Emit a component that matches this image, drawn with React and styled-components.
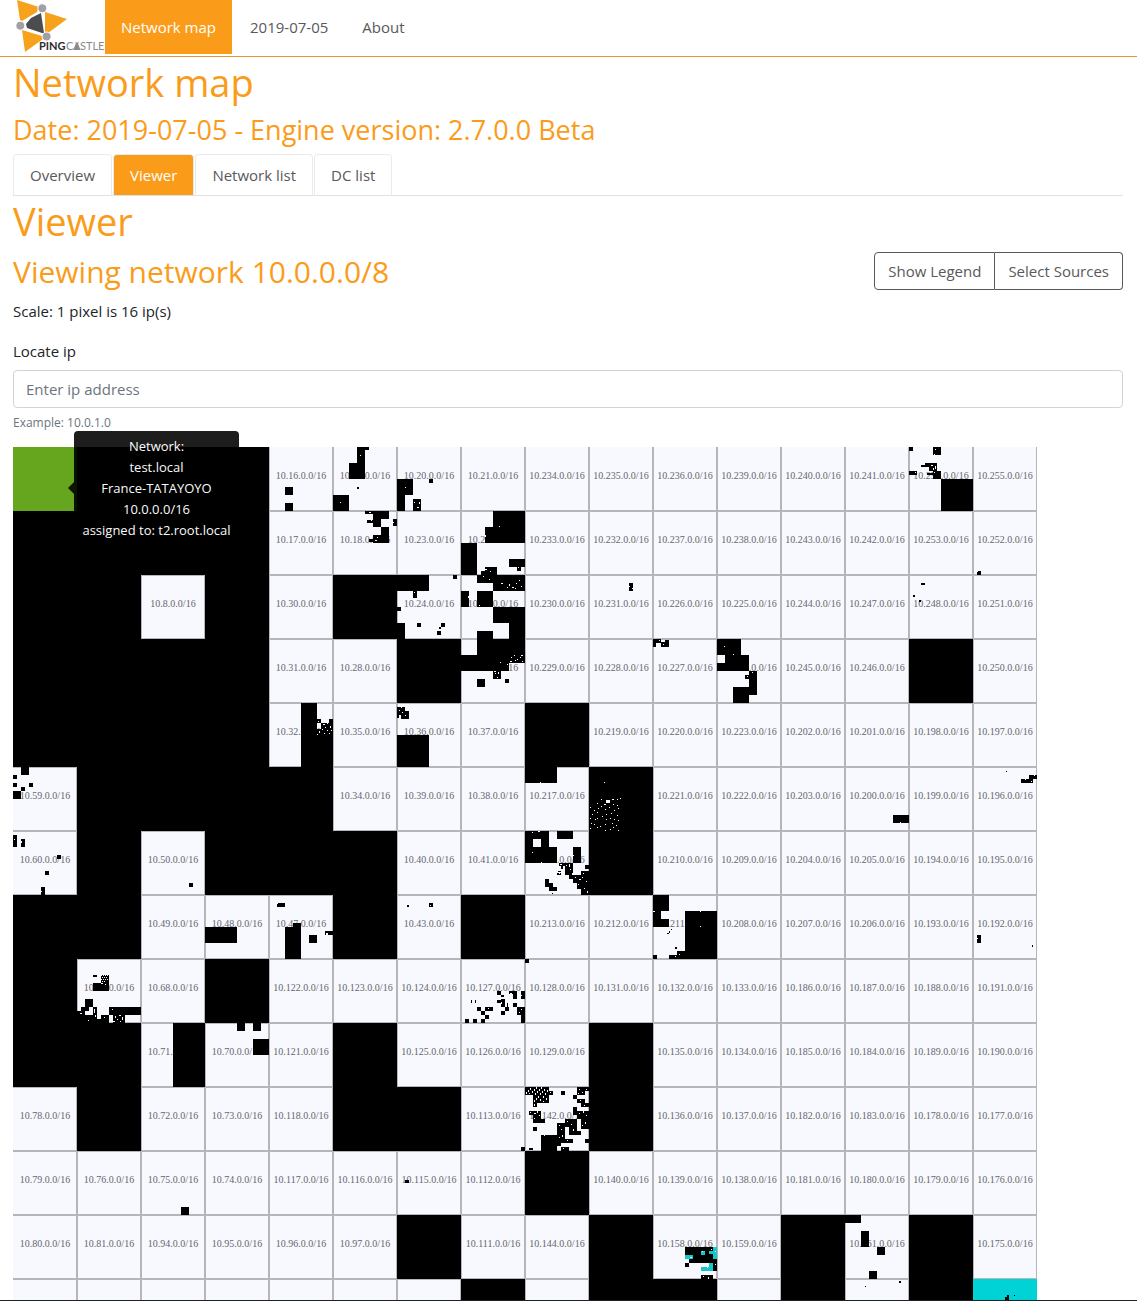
import React from "react";
import styled, { createGlobalStyle, css } from "styled-components";

const ORANGE = "#fa9c1a";
const UI_FONT = '"Open Sans", "Noto Sans", sans-serif';

const GlobalStyle = createGlobalStyle`
  *, *::before, *::after { box-sizing: border-box; }
  body {
    margin: 0;
    background: #fff;
    color: #212529;
    font-family: ${UI_FONT};
    font-size: 15px;
    line-height: 24px;
  }
`;

const Page = styled.div`
  display: flex;
  flex-direction: column;
  height: 100vh;
  overflow: hidden;
  border-bottom: 1px solid #1d2424;
`;

const Header = styled.header`
  display: flex;
  align-items: flex-start;
  flex: none;
  height: 57px;
  padding-left: 13px;
  border-bottom: 1px solid #e39a2d;
`;

const Brand = styled.a`
  display: block;
  width: 92px;
  height: 54px;
`;

const Nav = styled.nav`
  display: flex;
  gap: 2px;
`;

const NavLink = styled.a`
  padding: 15px 16px;
  color: ${(p) => (p.$active ? "#fff" : "#58595b")};
  background: ${(p) => (p.$active ? ORANGE : "transparent")};
  text-decoration: none;
`;

const Main = styled.main`
  display: flex;
  flex-direction: column;
  flex: 1;
  min-height: 0;
  padding: 0 14px 0 13px;
`;

const Title = styled.h1`
  flex: none;
  margin: 0 0 5px;
  color: ${ORANGE};
  font-size: 38px;
  line-height: 51px;
  font-weight: 400;
`;

const Subtitle = styled.h2`
  flex: none;
  margin: 0 0 7px;
  color: ${ORANGE};
  font-size: 27px;
  line-height: 34px;
  font-weight: 400;
`;

const Tabs = styled.div`
  display: flex;
  gap: 1px;
  flex: none;
  height: 42px;
  border-bottom: 1px solid #dee2e6;
`;

const Tab = styled.button`
  padding: 8px 15px;
  border: 1px solid #e9ecef;
  border-bottom: 0;
  border-radius: 4px 4px 0 0;
  background: ${(p) => (p.$active ? ORANGE : "#fff")};
  color: ${(p) => (p.$active ? "#fff" : "#58595b")};
  font: inherit;
  padding: 8px 16px;
`;

const TitleRow = styled.div`
  display: flex;
  flex: none;
  justify-content: space-between;
  margin-bottom: 7px;
`;

const NetworkTitle = styled.h2`
  margin: 0;
  color: ${ORANGE};
  font-size: 30px;
  line-height: 40px;
  font-weight: 400;
`;

const ButtonGroup = styled.div`
  display: flex;
  height: 38px;
`;

const OutlineButton = styled.button`
  padding: 0 13px;
  border: 1px solid #58595b;
  background: #fff;
  color: #58595b;
  font: inherit;
  &:first-child { border-radius: 4px 0 0 4px; }
  &:last-child { border-radius: 0 4px 4px 0; border-left: 0; }
`;

const Scale = styled.p`
  flex: none;
  margin: 0 0 16px;
`;

const Field = styled.div`
  display: flex;
  flex: none;
  flex-direction: column;
  margin-bottom: 15px;
`;

const Label = styled.label`
  margin-bottom: 7px;
`;

const Input = styled.input`
  height: 38px;
  padding: 6px 12px;
  border: 1px solid #ced4da;
  border-radius: 4px;
  color: #495057;
  font: inherit;
  &::placeholder { color: #6c757d; opacity: 1; }
`;

const Hint = styled.small`
  margin-top: 5px;
  color: #6c757d;
  font-size: 12px;
  line-height: 19px;
`;

const MapArea = styled.div`
  position: relative;
  flex: 1;
  min-height: 0;
`;

const Clip = styled.div`
  height: 100%;
  overflow: hidden;
`;

const MapGrid = styled.div`
  display: grid;
  grid-template-columns: repeat(16, 64px);
  grid-auto-rows: 64px;
`;

const LINE = "#b5b5ba";

const Cell = styled.div`
  display: grid;
  background: ${(p) => p.$fill};
  ${(p) =>
    p.$fill === "#f8f8ff" &&
    css`
      box-shadow: ${[
        `inset -1px -1px ${LINE}`,
        !p.$firstCol && `inset 1px 0 ${LINE}`,
        !p.$firstRow && `inset 0 1px ${LINE}`,
      ]
        .filter(Boolean)
        .join(", ")};
    `}
`;

const CellLabel = styled.span`
  grid-area: 1 / 1;
  align-self: center;
  justify-self: center;
  padding-bottom: 6px;
  color: #66666a;
  font-family: "Liberation Serif", serif;
  font-size: 10px;
  line-height: 12px;
  white-space: nowrap;
`;

const Marks = styled.svg`
  grid-area: 1 / 1;
  display: block;
  width: 64px;
  height: 64px;
  z-index: 1;
`;

const Tooltip = styled.div`
  position: absolute;
  z-index: 2;
  left: 61px;
  top: -16px;
  width: 165px;
  padding: 5px 8px 3px;
  border-radius: 4px;
  background: rgba(0, 0, 0, 0.9);
  color: #fff;
  font-size: 13px;
  line-height: 21px;
  text-align: center;
  white-space: nowrap;
  opacity: 0.98;
  &::before {
    content: "";
    position: absolute;
    left: -6px;
    top: 50%;
    margin-top: -6px;
    border: 6px solid transparent;
    border-left-width: 0;
    border-right-color: #0c1206;
  }
`;

// One line per row of /16 networks along the Hilbert curve.
// "#" is a fully occupied network, G the selected one, C a cyan one.
const ROWS = [
  "G # # # 16 19 20 21 234 235 236 239 240 241 254 255",
  "# # # # 17 18 23 22 233 232 237 238 243 242 253 252",
  "# # 8 # 30 # 24 25 230 231 226 225 244 247 248 251",
  "# # # # 31 28 # 26 229 228 227 224 245 246 # 250",
  "# # # # 32 35 36 37 # 219 220 223 202 201 198 197",
  "59 # # # # 34 39 38 217 #216 221 222 203 200 199 196",
  "60 # 50 # # # 40 41 214 # 210 209 204 205 194 195",
  "# # 49 48 47 # 43 # 213 212 211 208 207 206 193 192",
  "# 67 68 # 122 123 124 127 128 131 132 133 186 187 188 191",
  "# # 71 70 121 # 125 126 129 # 135 134 185 184 189 190",
  "78 # 72 73 118 # # 113 142 # 136 137 182 183 178 177",
  "79 76 75 74 117 116 115 112 # 140 139 138 181 180 179 176",
  "80 81 94 95 96 97 # 111 144 # 158 159 # 161 # 175",
  "_ _ _ _ _ _ _ # _ # # _ # _162 # C",
];

// Occupied blocks inside a network: x y width height, in map pixels.
// k = black, w = free spots inside black, c = cyan.
const MARKS = {
  16: { k: "16 40 8 8,16 56 8 8" },
  19: { k: "24 0 8 16,32 0 4 3,16 16 16 16,24 40 2 2,0 48 16 16", w: "27 8 1 1,7 55 1 1" },
  20: { k: "0 32 16 16,0 48 8 16,16 52 8 12,32 32 4 4", w: "8 40 1 1,17 55 1 1,20 60 2 1,22 55 1 2" },
  18: { k: "32 0 8 3,40 0 16 8,40 8 8 8,34 9 6 3,60 8 4 7,48 16 8 16,40 24 8 8,36 28 4 3", w: "36 1 2 1,38 9 1 1,44 26 1 1,42 29 2 1,60 11 1 1" },
  22: { k: "32 0 32 16,24 16 40 16,0 32 16 32,48 48 16 8,56 56 4 4,24 56 12 8,20 60 4 4", w: "38 15 1 1,24 24 1 2,57 56 1 1,24 58 2 1,29 60 1 1" },
  24: { k: "0 0 32 16,56 0 4 4,16 16 4 7,0 32 4 4,0 48 8 16,20 48 4 4,44 48 4 4,42 52 2 2,40 56 4 4", w: "17 17 1 1" },
  25: {
    k: "16 0 48 8,32 8 32 8,0 16 8 16,16 16 16 16,32 32 32 16,48 48 16 16,16 56 16 8",
    w: "22 1 1 1,28 4 1 1,40 8 2 1,48 9 1 2,51 12 2 1,55 8 1 1,54 13 1 1,58 5 1 1,60 11 1 1,46 12 1 1,7 21 1 2,18 30 1 1",
  },
  26: {
    k: "16 0 48 16,0 16 64 8,0 24 48 8,16 40 8 8,32 32 8 8,44 40 4 4",
    w: "50 18 1 1,53 16 1 1,56 20 1 1,59 18 1 1,61 22 1 1,49 22 2 1,54 21 1 1,39 23 1 1,46 25 1 1,34 34 1 1,37 33 1 2,36 38 1 1,33 32 2 1,60 16 2 1",
  },
  231: { k: "40 8 4 8", w: "40 11 1 1,43 13 1 1" },
  227: { k: "0 0 8 4,0 4 3 4,8 3 4 5,12 1 4 7", w: "6 1 1 1,10 5 1 1" },
  224: { k: "0 0 24 16,8 16 24 16,0 24 8 8,32 32 8 24,28 36 4 4,16 48 16 16", w: "7 7 1 1,16 15 1 1,35 33 1 1,30 37 1 1" },
  217: { k: "0 0 32 16", w: "15 15 1 1" },
  216: {
    k: "",
    w: "15 15 1 1,12 32 1 1,17 33 4 3,23 32 2 1,28 32 1 1,31 31 1 1,8 36 1 1,15 37 2 1,24 37 1 1,28 38 1 1,1 40 1 1,5 43 1 1,9 41 1 1,12 39 1 1,16 42 1 1,20 40 1 1,25 43 1 1,29 41 1 1,3 47 1 1,8 45 1 1,17 47 1 1,22 46 1 1,28 48 1 1,1 51 1 1,6 52 1 1,8 51 1 1,13 49 1 1,17 52 1 1,21 51 1 1,25 52 1 1,29 53 1 1,2 56 1 1,5 57 1 1,16 57 1 1,23 56 1 1,27 58 1 1,1 61 1 1,8 60 1 1,11 59 1 1,16 63 1 1,21 62 1 1,24 60 1 1,29 63 1 1",
  },
  254: { k: "0 0 4 4,24 0 8 8,0 24 8 4,12 18 4 2,16 16 12 4,20 20 8 4,18 26 6 2,24 24 8 8,32 32 32 32", w: "26 2 1 1,25 7 1 1,22 18 2 1,24 21 1 2,26 19 1 3,6 25 1 1,25 25 1 1" },
  252: { k: "4 60 4 4", w: "4 60 1 1" },
  248: { k: "12 8 4 2,4 20 2 2,10 25 2 2" },
  196: { k: "33 4 1 1,56 8 8 4,48 12 12 4", w: "52 12 1 1,58 14 1 1,61 8 1 1" },
  200: { k: "48 48 16 8", w: "55 55 1 1" },
  32: {
    k: "32 0 16 32,32 32 32 32,48 16 4 4,60 16 4 4,52 20 12 12,48 26 4 6",
    w: "49 18 1 1,54 21 2 1,58 20 1 1,56 24 1 1,61 23 1 2,53 26 1 1,58 27 1 1,50 28 1 2,60 30 1 1,55 30 1 1,48 31 1 1,62 27 1 1",
  },
  36: { k: "0 4 8 4,0 8 12 4,4 12 8 4,0 12 2 3,0 32 32 32", w: "4 4 1 1,5 9 1 1,8 12 1 1,2 7 1 1" },
  59: { k: "8 0 8 8,0 8 4 4,0 16 4 4,16 16 4 4,8 20 4 4,0 24 8 8" },
  60: { k: "0 4 4 12,8 8 4 8,44 24 4 4,32 40 4 4,28 56 4 8", w: "1 8 1 1,8 10 1 2,28 60 1 1" },
  50: { k: "48 52 4 4" },
  48: { k: "0 32 32 16" },
  47: { k: "8 8 8 4,16 32 16 32,24 28 8 4,40 40 8 8,56 36 8 4", w: "8 8 1 1,57 38 2 2" },
  67: {
    k: "16 24 16 8,24 16 8 8,16 16 4 2,8 40 8 8,4 48 8 4,0 52 8 12,16 48 4 16,8 56 8 8,20 60 4 4,24 56 8 8,32 48 32 8,36 56 12 8",
    w: "24 16 1 1,26 16 1 1,28 16 1 1,30 16 1 1,25 18 1 1,27 18 1 1,29 18 1 1,24 20 1 1,26 20 1 1,28 20 1 1,30 20 1 1,25 22 1 1,27 22 1 1,24 24 2 1,28 25 1 1,3 54 2 1,17 50 1 4,18 56 1 2,35 50 1 1,38 57 1 2,42 56 2 1,40 60 1 1,45 58 1 3,36 62 2 1,43 62 1 1,27 58 1 1,11 61 1 1",
  },
  71: { k: "32 0 32 64" },
  70: { k: "32 0 8 8,48 0 8 8,48 16 16 16" },
  214: {
    k: "0 0 24 16,0 16 32 16,32 0 16 8,48 16 8 16,40 32 8 12,34 32 6 3,36 35 2 3,32 42 4 2,33 40 3 1,44 40 4 8,48 44 8 8,52 50 6 8,56 40 8 24,60 34 4 4,20 48 4 8,24 52 4 8,28 56 4 4,27 62 1 1",
    w: "8 8 8 8,7 1 1 1,13 0 2 1,7 21 1 1,16 31 1 1,48 24 1 1,41 34 1 1,44 33 1 3,45 38 1 1,47 42 1 2,50 46 1 1,54 48 2 1,57 46 1 1,61 50 1 1,59 57 1 1,53 53 1 1,35 33 2 1,58 42 1 1,62 60 1 2,34 42 1 1",
  },
  43: { k: "10 10 2 2,32 8 4 4", w: "33 10 1 1" },
  211: { k: "0 0 16 16,0 16 8 8,0 24 16 8,32 16 32 48,24 56 8 8,16 60 8 4,0 60 4 4,14 38 2 1,16 36 1 2,18 34 1 1,22 52 2 2", w: "47 16 1 1,47 31 1 1,0 16 2 1,26 59 1 1,22 61 1 1" },
  192: { k: "4 40 4 8,59 50 1 2", w: "4 43 1 1" },
  127: {
    k: "36 32 4 4,40 36 3 2,48 32 8 3,52 35 4 5,60 32 4 8,10 41 1 3,14 41 1 3,36 41 8 3,40 40 4 8,52 44 4 4,46 44 1 4,44 48 4 4,40 52 4 4,16 48 4 4,24 48 8 4,20 52 4 4,56 48 8 8,60 56 4 8,24 56 4 4,4 60 4 4,12 60 4 4,20 60 4 4",
    w: "49 34 2 1,60 36 1 1,40 43 1 2,60 50 1 1,58 53 1 1,27 49 1 1",
  },
  128: { k: "0 0 4 4" },
  113: { k: "60 60 4 4" },
  142: {
    k: "0 0 24 8,8 8 16 8,24 4 4 4,8 16 4 4,36 4 4 4,4 24 4 4,8 24 8 8,8 32 12 4,8 40 4 4,16 48 16 16,52 0 8 8,60 0 4 4,48 8 4 4,52 12 8 4,56 16 8 4,48 20 4 8,52 24 12 8,32 36 8 12,40 32 12 8,56 32 8 10,44 40 8 8,52 44 4 4,32 48 8 8,40 52 8 4,60 52 4 4,36 60 8 4,32 56 4 3,4 61 4 2",
    w: "1 5 1 2,3 3 1 2,5 1 1 2,4 6 1 1,7 4 1 2,9 2 1 2,11 0 1 2,10 6 1 2,12 4 1 2,14 2 1 2,16 0 1 2,13 9 1 2,15 6 1 2,17 4 1 2,19 2 1 2,11 11 1 2,9 13 1 2,15 12 1 2,18 9 1 2,20 6 1 2,22 3 1 2,21 11 1 2,18 14 1 1,25 5 1 1,9 17 1 2,5 25 1 1,9 26 2 1,12 24 1 2,14 28 1 1,9 31 1 1,54 2 1 1,53 6 1 1,57 5 1 1,61 2 1 1,55 13 1 1,59 18 1 1,54 26 1 1,58 24 1 2,61 28 1 1,60 35 1 2,57 38 1 1,34 38 1 1,36 42 1 1,42 34 1 1,46 37 1 1,48 42 1 2,34 50 1 1,37 48 1 2,42 53 1 1,38 61 1 1,19 48 1 1",
  },
  75: { k: "40 56 8 8" },
  115: { k: "8 29 4 3" },
  158: {
    k: "32 32 28 8,36 40 28 8,32 48 4 4,60 48 4 8,48 60 12 4",
    c: "60 32 4 12,56 36 4 3,32 40 8 4,48 36 4 4,48 52 12 4,56 48 4 4",
    w: "49 36 1 1,58 34 1 1,62 36 1 1,37 42 2 1,54 52 1 1,50 61 1 1,55 62 1 2,62 49 1 1",
  },
  161: { k: "0 0 16 8,16 16 8 16,32 32 8 8,24 56 8 8" },
  162: { k: "20 7 1 1,54 2 2 2" },
  C: { k: "32 18 4 6,34 16 2 2,41 16 1 1" },
};

const FILLS = { "#": "#000", G: "#66a61e", C: "#00d2d6" };
const INKS = { k: "#000", c: "#12c9cc", w: "#f8f8ff" };

const toPath = (list) =>
  list
    .split(",")
    .filter(Boolean)
    .map((r) => {
      const [x, y, w, h] = r.split(" ");
      return `M${x} ${y}h${w}v${h}h-${w}z`;
    })
    .join("");

function NetworkCell({ code, row, col }) {
  const kind = FILLS[code[0]];
  const id = kind || code[0] === "_" ? code.slice(1) || code : code;
  const marks = MARKS[id];
  const label = !kind && code[0] !== "_" ? `10.${code}.0.0/16` : null;
  return (
    <Cell $fill={kind || "#f8f8ff"} $firstRow={row === 0} $firstCol={col === 0}>
      {label && <CellLabel>{label}</CellLabel>}
      {marks && (
        <Marks viewBox="0 0 64 64" shapeRendering="crispEdges" aria-hidden="true">
          {["k", "c", "w"].map(
            (ink) => marks[ink] && <path key={ink} d={toPath(marks[ink])} fill={INKS[ink]} />
          )}
        </Marks>
      )}
    </Cell>
  );
}

function Logo() {
  return (
    <svg width="92" height="54" viewBox="13 0 92 54" role="img" aria-label="Ping Castle">
      <g fill="#f6a21c">
        <path d="M17 0L39 7L37 12L22 21L20 20Z" />
        <path d="M45 12L67 19L48 33L45 32Z" />
        <path d="M22 30L42 36L43 39L25 52Z" />
      </g>
      <path d="M26 24L31 18L41 13L44 33L42 33L27 28Z" fill="#4b4c50" />
      <g fill="#a3a0a5" stroke="#fff" strokeWidth="1">
        <circle cx="42.300" cy="8.300" r="4.500" />
        <circle cx="20.300" cy="25.700" r="4.500" />
        <circle cx="46.600" cy="36.500" r="4.500" />
      </g>
      <text x="39" y="50" fontFamily="Lato, sans-serif" fontWeight="700" fontSize="11" fill="#2c2c2e">PING</text>
      <g fontFamily="Lato, sans-serif" fontSize="11" fill="#8b898d">
        <text x="66" y="50">C</text>
        <text x="80" y="50">STLE</text>
      </g>
      <path d="M73 50L76 43.500H75.500V42H76.500V43H77.500V42H78.500V43.500H78L80.500 50Z" fill="#8b898d" />
    </svg>
  );
}

export default function App() {
  return (
    <>
      <GlobalStyle />
      <Page>
        <Header>
          <Brand href="#"><Logo /></Brand>
          <Nav>
            <NavLink href="#map" $active>Network map</NavLink>
            <NavLink href="#date">2019-07-05</NavLink>
            <NavLink href="#about">About</NavLink>
          </Nav>
        </Header>
        <Main>
          <Title>Network map</Title>
          <Subtitle>Date: 2019-07-05 - Engine version: 2.7.0.0 Beta</Subtitle>
          <Tabs>
            <Tab type="button">Overview</Tab>
            <Tab type="button" $active>Viewer</Tab>
            <Tab type="button">Network list</Tab>
            <Tab type="button">DC list</Tab>
          </Tabs>
          <Title as="h2">Viewer</Title>
          <TitleRow>
            <NetworkTitle>Viewing network 10.0.0.0/8</NetworkTitle>
            <ButtonGroup>
              <OutlineButton type="button">Show Legend</OutlineButton>
              <OutlineButton type="button">Select Sources</OutlineButton>
            </ButtonGroup>
          </TitleRow>
          <Scale>Scale: 1 pixel is 16 ip(s)</Scale>
          <Field>
            <Label htmlFor="ip">Locate ip</Label>
            <Input id="ip" type="text" placeholder="Enter ip address" aria-describedby="ip-hint" />
            <Hint id="ip-hint">Example: 10.0.1.0</Hint>
          </Field>
          <MapArea>
            <Clip>
              <MapGrid>
                {ROWS.flatMap((line, row) =>
                  line.split(" ").map((code, col) => (
                    <NetworkCell key={`${row}-${col}`} code={code} row={row} col={col} />
                  ))
                )}
              </MapGrid>
            </Clip>
            <Tooltip role="tooltip">
              Network:
              <br />
              test.local
              <br />
              France-TATAYOYO
              <br />
              10.0.0.0/16
              <br />
              assigned to: t2.root.local
            </Tooltip>
          </MapArea>
        </Main>
      </Page>
    </>
  );
}
